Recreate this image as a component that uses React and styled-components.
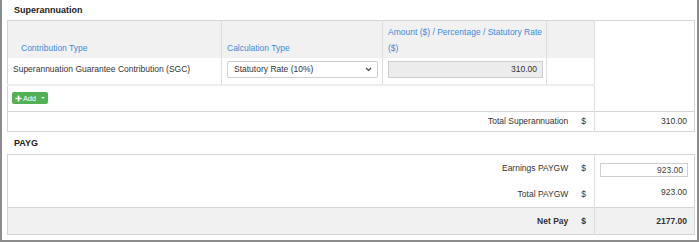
import styled, { createGlobalStyle } from 'styled-components';

const GlobalStyle = createGlobalStyle`
  html, body {
    margin: 0;
    padding: 0;
    background: #ffffff;
  }
  body {
    font-family: "Liberation Sans", Arial, sans-serif;
    color: #333333;
  }
`;

const colors = {
  border: '#d4d4d4',
  divider: '#dedede',
  headBg: '#f1f1f1',
  blue: '#3d8ad6',
  green: '#52b152',
};

function Chevron() {
  return (
    <svg width="7" height="5" viewBox="0 0 7 5">
      <path d="M1 1 L3.5 3.5 L6 1" fill="none" stroke="#444" strokeWidth="1.2" />
    </svg>
  );
}

function Plus() {
  return (
    <svg width="7" height="7" viewBox="0 0 7 7">
      <path d="M3.5 0.5 V6.5 M0.5 3.5 H6.5" stroke="#fff" strokeWidth="1.6" />
    </svg>
  );
}

export default function App() {
  return (
    <>
      <GlobalStyle />
      <Frame>
        <SectionTitle $height={20}>Superannuation</SectionTitle>
        <Table>
          <colgroup>
            <col style={{ width: 214 }} />
            <col style={{ width: 161 }} />
            <col style={{ width: 164 }} />
            <col style={{ width: 48 }} />
            <col style={{ width: 100 }} />
          </colgroup>
          <tbody>
            <HeadRow>
              <HeadCell $first>Contribution Type</HeadCell>
              <HeadCell>Calculation Type</HeadCell>
              <HeadCell>Amount ($) / Percentage / Statutory Rate ($)</HeadCell>
              <HeadCell />
              <SideCell rowSpan={3} />
            </HeadRow>
            <DataRow>
              <DataCell>Superannuation Guarantee Contribution (SGC)</DataCell>
              <DataCell>
                <Select>
                  <span>Statutory Rate (10%)</span>
                  <Chevron />
                </Select>
              </DataCell>
              <DataCell>
                <AmountBox>310.00</AmountBox>
              </DataCell>
              <DataCell $noBorder />
            </DataRow>
            <AddRow>
              <AddCell colSpan={4}>
                <AddButton>
                  <Plus />
                  <span>Add</span>
                  <Caret />
                </AddButton>
              </AddCell>
            </AddRow>
            <TotalRow>
              <LabelCell colSpan={4}>
                <Label>Total Superannuation</Label>
                <Dollar>$</Dollar>
              </LabelCell>
              <ValueCell>310.00</ValueCell>
            </TotalRow>
          </tbody>
        </Table>

        <SectionTitle $height={22}>PAYG</SectionTitle>
        <Table>
          <colgroup>
            <col style={{ width: 587 }} />
            <col style={{ width: 100 }} />
          </colgroup>
          <tbody>
            <PaygRow $height={27}>
              <LabelCell>
                <Label>Earnings PAYGW</Label>
                <Dollar>$</Dollar>
              </LabelCell>
              <ValueCell $top>
                <EarningsInput>923.00</EarningsInput>
              </ValueCell>
            </PaygRow>
            <PaygRow $height={26}>
              <LabelCell>
                <Label>Total PAYGW</Label>
                <Dollar>$</Dollar>
              </LabelCell>
              <ValueCell $raise>923.00</ValueCell>
            </PaygRow>
            <NetRow>
              <LabelCell>
                <Label $bold>Net Pay</Label>
                <Dollar $bold>$</Dollar>
              </LabelCell>
              <ValueCell $bold>2177.00</ValueCell>
            </NetRow>
          </tbody>
        </Table>
      </Frame>
    </>
  );
}

const Frame = styled.div`
  box-sizing: border-box;
  width: 699px;
  height: 242px;
  border: 2px solid #8c8c8c;
  border-top: none;
  padding: 0 3px 0 5px;
  font-size: 8.5px;
`;

const SectionTitle = styled.div`
  height: ${(p) => p.$height}px;
  padding-left: 7px;
  display: flex;
  align-items: center;
  font-size: 9px;
  font-weight: bold;
  color: #222;
`;

const Table = styled.table`
  width: 687px;
  table-layout: fixed;
  border-collapse: collapse;
  border: 1px solid ${colors.border};
`;

const HeadRow = styled.tr`
  height: 37px;
`;

const HeadCell = styled.td`
  background: ${colors.headBg};
  color: ${colors.blue};
  vertical-align: bottom;
  line-height: 16px;
  padding: 3px 1px 2px ${(p) => (p.$first ? '13px' : '5px')};
  border-right: 1px solid ${colors.divider};
`;

const SideCell = styled.td`
  background: #fff;
  border-left: 1px solid ${colors.divider};
`;

const DataRow = styled.tr`
  height: 27px;
`;

const DataCell = styled.td`
  vertical-align: top;
  padding: 3px 4px 0 5px;
  line-height: 17px;
  border-right: ${(p) => (p.$noBorder ? 'none' : `1px solid ${colors.divider}`)};
`;

const Select = styled.div`
  box-sizing: border-box;
  height: 17px;
  width: 151px;
  border: 1px solid #cfcfcf;
  border-radius: 2px;
  background: #fff;
  display: flex;
  align-items: center;
  justify-content: space-between;
  padding: 0 5px 0 6px;
  color: #333;
`;

const AmountBox = styled.div`
  box-sizing: border-box;
  height: 17px;
  width: 155px;
  border: 1px solid #cdcdcd;
  background: #ececec;
  text-align: right;
  padding: 0 5px;
  line-height: 15px;
  color: #333;
`;

const AddRow = styled.tr`
  height: 26px;
`;

const AddCell = styled.td`
  border-top: 2px solid #ededed;
  vertical-align: top;
  padding: 6px 4px 0;
`;

const AddButton = styled.div`
  display: inline-flex;
  align-items: center;
  gap: 1px;
  height: 12px;
  width: 36px;
  box-sizing: border-box;
  padding: 0 3px;
  background: ${colors.green};
  border-radius: 2px;
  color: #fff;
  font-size: 7.5px;
  letter-spacing: -0.2px;
`;

const Caret = styled.span`
  margin-left: 4px;
  width: 0;
  height: 0;
  border-left: 2.5px solid transparent;
  border-right: 2.5px solid transparent;
  border-top: 2.5px solid #e6f4e6;
`;

const TotalRow = styled.tr`
  height: 20px;
  border-top: 1px solid ${colors.border};
`;

const LabelCell = styled.td`
  padding: 0 8px 0 0;
  border-right: 1px solid ${colors.divider};
  text-align: right;
  white-space: nowrap;
`;

const Label = styled.span`
  font-weight: ${(p) => (p.$bold ? 'bold' : 'normal')};
`;

const Dollar = styled.span`
  display: inline-block;
  margin-left: 13px;
  font-weight: ${(p) => (p.$bold ? 'bold' : 'normal')};
`;

const ValueCell = styled.td`
  text-align: right;
  padding: ${(p) => (p.$raise ? '0 7px 4px 0' : '0 7px 0 0')};
  vertical-align: ${(p) => (p.$top ? 'top' : 'middle')};
  font-weight: ${(p) => (p.$bold ? 'bold' : 'normal')};
`;

const PaygRow = styled.tr`
  height: ${(p) => p.$height}px;
`;

const EarningsInput = styled.div`
  box-sizing: border-box;
  margin: 8px -1px 0 auto;
  width: 88px;
  height: 14px;
  border: 1px solid #cfcfcf;
  padding: 0 4px;
  line-height: 12px;
  text-align: right;
  color: #444;
`;

const NetRow = styled.tr`
  height: 27px;
  background: ${colors.headBg};
  border-top: 1px solid ${colors.border};
`;
